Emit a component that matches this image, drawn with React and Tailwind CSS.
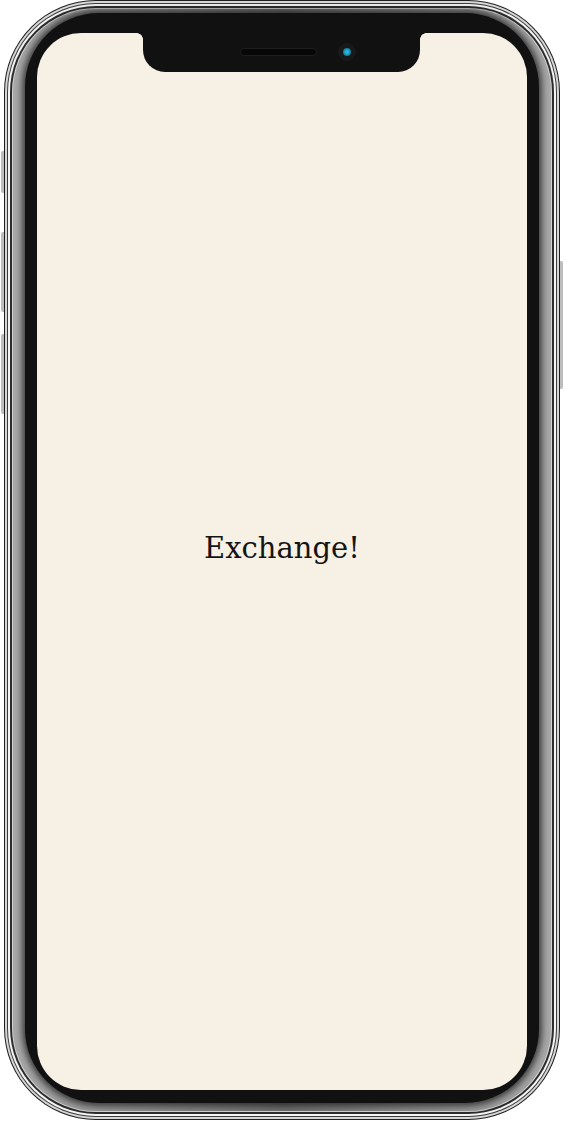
export default function App() {
  return (
    <div className="w-[564px] h-[1125px] bg-white pl-[4px]">
      {/* Phone */}
      <div className="relative w-[556px] h-[1120px]">
        {/* side buttons */}
        <div className="absolute left-[-3px] top-[151px] w-[3px] h-[42px] rounded-l-[2px] bg-[#bdbdbd]" />
        <div className="absolute left-[-3px] top-[232px] w-[3px] h-[80px] rounded-l-[2px] bg-[#bdbdbd]" />
        <div className="absolute left-[-3px] top-[334px] w-[3px] h-[80px] rounded-l-[2px] bg-[#bdbdbd]" />
        <div className="absolute right-[-3px] top-[261px] w-[3px] h-[128px] rounded-r-[2px] bg-[#bdbdbd]" />

        {/* chrome frame */}
        <div className="h-full rounded-[92px] bg-[#1e1e1e] p-px">
          <div className="h-full rounded-[91px] bg-[#d6d6d6] p-[2px]">
            <div className="h-full rounded-[89px] bg-[#3a3a3a] p-px">
              <div className="h-full rounded-[88px] bg-[#f4f4f4] p-[2px]">
                <div className="h-full rounded-[86px] bg-[#2c2c2c] p-[2px]">
                  <div className="h-full rounded-[84px] bg-[#d0d0d0] p-px">
                    {/* grey band */}
                    <div className="h-full rounded-[83px] bg-[linear-gradient(90deg,#a8a8a8,#6e6e6e_50%,#a8a8a8)] px-[12px] pt-[4px] pb-[8px]">
                      {/* black bezel */}
                      <div className="h-full rounded-[74px] bg-[#111111] px-[12px] pt-[20px] pb-[13px] shadow-[0_0_6px_3px_rgba(17,17,17,0.7)]">
                        {/* screen */}
                        <div className="relative h-full rounded-[44px] bg-[#f7f0e4] flex items-center justify-center">
                          {/* notch */}
                          <div className="absolute left-[106px] top-0 w-[277px] h-[39px] rounded-b-[22px] bg-[#111111] flex items-center pl-[97px] pb-[1px] gap-[21px]">
                            <div className="absolute left-[-6px] top-0 w-[6px] h-[6px] bg-[radial-gradient(circle_at_0_100%,transparent_5.5px,#111111_6px)]" />
                            <div className="absolute right-[-6px] top-0 w-[6px] h-[6px] bg-[radial-gradient(circle_at_100%_100%,transparent_5.5px,#111111_6px)]" />
                            <div className="w-[77px] h-[8px] rounded-full bg-[#070707] border border-[#1d1d1d]" />
                            <div className="w-[18px] h-[18px] rounded-full bg-[#191919] flex items-center justify-center">
                              <div className="w-[8px] h-[8px] rounded-full bg-[radial-gradient(circle,#34c3e6_0%,#1590b0_55%,#0a3d50_100%)]" />
                            </div>
                          </div>

                          <p className="mb-[27px] font-['DejaVu_Serif',serif] text-[29px] leading-none text-[#141414]">
                            Exchange!
                          </p>
                        </div>
                      </div>
                    </div>
                  </div>
                </div>
              </div>
            </div>
          </div>
        </div>
      </div>
    </div>
  );
}
